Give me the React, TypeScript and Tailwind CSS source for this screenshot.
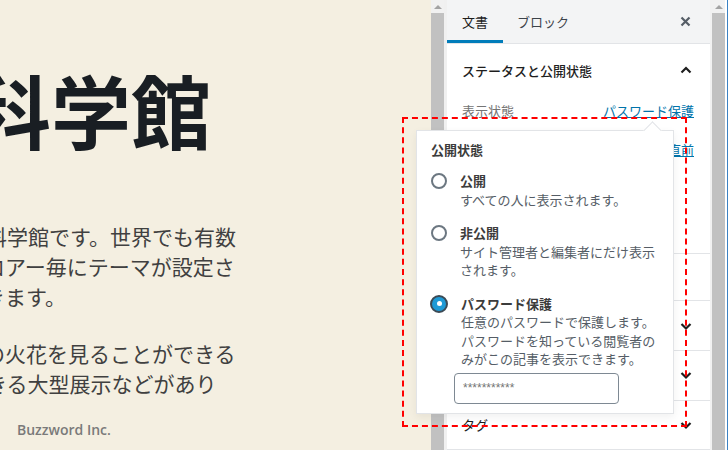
import React from "react";

const jp = "font-['Noto_Sans_CJK_JP',sans-serif]";

function Chevron({ up = false }: { up?: boolean }) {
  return (
    <svg width="14" height="14" viewBox="0 0 14 14" className="text-[#1e1e1e]">
      <path
        d={up ? "M2.5 9.5 L7 5 L11.5 9.5" : "M2.5 5 L7 9.5 L11.5 5"}
        fill="none"
        stroke="currentColor"
        strokeWidth="2.2"
      />
    </svg>
  );
}

function ScrollBar() {
  return (
    <div className="w-[13px] flex flex-col bg-[#f1f1f1]">
      <div className="h-[13px] flex items-center justify-center">
        <div className="w-0 h-0 border-l-[4px] border-r-[4px] border-b-[4px] border-l-transparent border-r-transparent border-b-[#a3a3a3]" />
      </div>
      <div className="flex-1 bg-[#c1c1c1]" />
    </div>
  );
}

function Radio({ checked = false }: { checked?: boolean }) {
  if (checked) {
    return (
      <div className="w-[18px] h-[18px] -ml-[1px] rounded-full border-2 border-[#3c4a55] bg-[#1e9ad6] flex items-center justify-center shrink-0">
        <div className="w-[5px] h-[5px] rounded-full bg-white" />
      </div>
    );
  }
  return <div className="w-[16px] h-[16px] rounded-full border-2 border-[#6c7781] bg-white shrink-0" />;
}

function Option({
  title,
  lines,
  checked,
}: {
  title: string;
  lines: string[];
  checked?: boolean;
}) {
  return (
    <div className="flex gap-[13px]">
      <div className="h-[18px] flex items-center">
        <Radio checked={checked} />
      </div>
      <div className="text-[13px] leading-[18.5px]">
        <div className="font-bold text-[#3c3c3c]">{title}</div>
        {lines.map((l) => (
          <div key={l} className="text-[#555d66]">
            {l}
          </div>
        ))}
      </div>
    </div>
  );
}

function Section({ title, chevron = true, h }: { title: string; chevron?: boolean; h: string }) {
  return (
    <div className={`${h} border-b border-[#e2e4e7] flex items-center justify-between pl-[15px] pr-[17px] text-[13px] text-[#1e1e1e]`}>
      <span>{title}</span>
      {chevron && <Chevron />}
    </div>
  );
}

export default function App() {
  return (
    <main className={`relative w-[728px] h-[450px] flex overflow-hidden bg-white ${jp}`}>
      {/* Editor canvas */}
      <section className="w-[431px] bg-[#f4efe1] overflow-hidden flex flex-col">
        <h1 className="mt-[68px] ml-[-29px] text-[80px] leading-none font-bold text-[#191e23] whitespace-nowrap">
          科学館
        </h1>
        <div className="mt-[73px] text-[21px] leading-[30px] text-[#404040] whitespace-nowrap">
          <p className="ml-[-14px]">科学館です。世界でも有数</p>
          <p className="ml-[-37px]">フロアー毎にテーマが設定さ</p>
          <p className="ml-[-37px]">できます。</p>
        </div>
        <div className="mt-[27px] text-[21px] leading-[30px] text-[#404040] whitespace-nowrap">
          <p className="ml-[-16px]">の火花を見ることができる</p>
          <p className="ml-[-35px]">できる大型展示などがあり</p>
        </div>
        <div className="mt-auto mb-[10px] ml-[17px] text-[14px] font-semibold text-[#7a7a7a] font-['Open_Sans',sans-serif]">
          Buzzword Inc.
        </div>
      </section>

      <ScrollBar />
      <div className="w-[3px] bg-[#f0f0f0]" />

      {/* Settings sidebar */}
      <aside className="w-[263px] bg-white flex flex-col">
        <div className="h-[45px] bg-[#f3f4f5] border-b border-[#e2e4e7] flex items-stretch text-[13px]">
          <div className="w-[56px] flex items-center justify-center border-b-[3px] border-[#007cba] pt-[3px] text-[#1e1e1e]">
            文書
          </div>
          <div className="ml-[14px] flex items-center text-[#3c434a]">ブロック</div>
          <div className="ml-auto mr-[19px] flex items-center">
            <svg width="11" height="11" viewBox="0 0 11 11">
              <path d="M1.5 1.5 L9.5 9.5 M9.5 1.5 L1.5 9.5" stroke="#555d66" strokeWidth="2.2" />
            </svg>
          </div>
        </div>

        <div className="h-[212px] border-b border-[#e2e4e7]">
          <div className="h-[52px] flex items-center justify-between pl-[15px] pr-[17px] text-[13px] font-medium text-[#1e1e1e]">
            <span>ステータスと公開状態</span>
            <Chevron up />
          </div>
          <div className="pl-[15px] pr-[16px] text-[13px]">
            <div className="h-[28px] flex items-center justify-between">
              <span className="text-[#757575]">表示状態</span>
              <span className="text-[#0073aa] underline">パスワード保護</span>
            </div>
            <div className="mt-[11px] h-[28px] flex items-center justify-between">
              <span className="text-[#757575]">公開</span>
              <span className="text-[#0073aa] underline">すぐに公開する直前</span>
            </div>
          </div>
        </div>
        <Section title="ゴミ箱へ移動" chevron={false} h="h-[48px]" />
        <Section title="パーマリンク" h="h-[51px]" />
        <Section title="カテゴリー" h="h-[50px]" />
        <Section title="タグ" h="h-[50px]" />
      </aside>

      <div className="w-[2px] bg-[#f1f1f1]" />
      <ScrollBar />
      <div className="w-[2px] bg-white" />
      <div className="w-[1px] bg-[#3b82c4]" />

      {/* Visibility popover */}
      <div className="absolute left-[416px] top-[130px] w-[258px] h-[284px] bg-white border border-[#e2e4e7] shadow-[0_3px_8px_rgba(0,0,0,0.06)] pl-[14px] pt-[10px]">
        <div className="absolute -top-[7px] left-[229px] w-[13px] h-[13px] bg-white border-l border-t border-[#e2e4e7] rotate-45" />
        <div className="text-[13px] font-bold text-[#3c3c3c] leading-[18px]">公開状態</div>
        <div className="mt-[13px] flex flex-col gap-[15px]">
          <Option title="公開" lines={["すべての人に表示されます。"]} />
          <Option title="非公開" lines={["サイト管理者と編集者にだけ表示", "されます。"]} />
          <div>
            <Option
              checked
              title="パスワード保護"
              lines={["任意のパスワードで保護します。", "パスワードを知っている閲覧者の", "みがこの記事を表示できます。"]}
            />
            <div className="ml-[23px] mt-[4px] w-[165px] h-[31px] border border-[#7e8993] rounded-[4px] flex items-center pl-[8px] text-[12px] text-[#757575] font-['Liberation_Sans',sans-serif]">
              ***********
            </div>
          </div>
        </div>
      </div>

      {/* Highlight frame */}
      <div className="absolute left-[402px] top-[117px] w-[285px] h-[310px] border-2 border-dashed border-[#ff0000]" />
    </main>
  );
}
